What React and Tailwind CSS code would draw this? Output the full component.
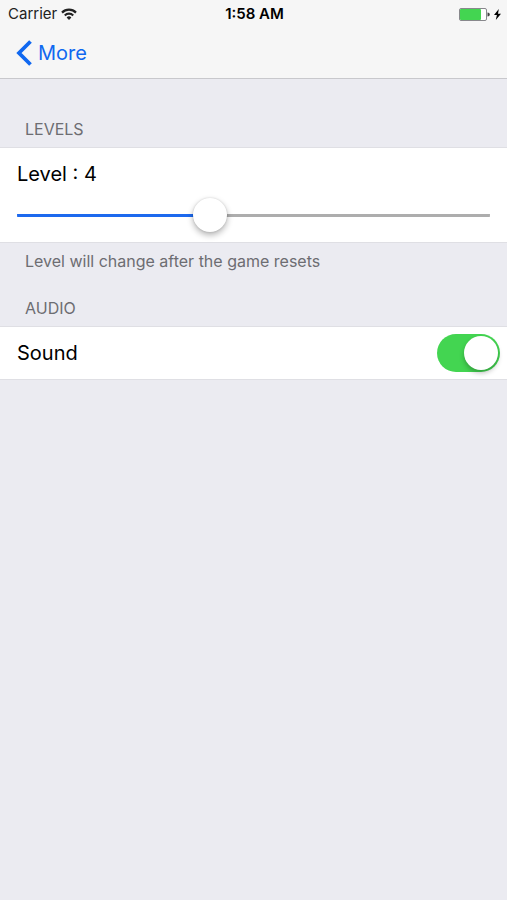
import React, { useState } from 'react';

const WifiIcon = ({ className }) => (
  <svg className={className} viewBox="0 0 16 12" fill="none" stroke="currentColor" strokeWidth="2.2" aria-hidden="true">
    <path d="M1 4.6a9.9 9.9 0 0 1 14 0" />
    <path d="M3.8 7.4a5.9 5.9 0 0 1 8.4 0" />
    <path d="M8 12 5.6 9.5a3.4 3.4 0 0 1 4.8 0Z" fill="currentColor" stroke="none" />
  </svg>
);

const BatteryIcon = ({ className }) => (
  <svg className={className} viewBox="0 0 31 13" aria-hidden="true">
    <rect x="0.5" y="0.5" width="27" height="12" rx="1.5" fill="#fff" stroke="#88888c" />
    <rect x="1" y="1" width="21" height="11" rx="1" fill="#43d551" />
    <path d="M28.5 4.5c1.7.3 2.3 1 2.3 2s-.6 1.7-2.3 2Z" fill="#444" />
  </svg>
);

const BoltIcon = ({ className }) => (
  <svg className={className} viewBox="0 0 7 11" fill="currentColor" aria-hidden="true">
    <path d="M4.8 0 0 6h2.9L1.8 11 7 4.7H4Z" />
  </svg>
);

const BackIcon = ({ className }) => (
  <svg className={className} viewBox="0 0 16 26" fill="none" stroke="currentColor" strokeWidth="3.8" aria-hidden="true">
    <path d="M14.5 1.5 3 13l11.5 11.5" />
  </svg>
);

const MAX_LEVEL = 10;

const App = () => {
  const [level, setLevel] = useState(4);
  const [sound, setSound] = useState(true);

  const filled = (level / MAX_LEVEL) * 100;

  return (
    <div className="min-h-screen bg-[#ebebf1] font-['Inter','Liberation_Sans',sans-serif] text-black">
      {/* Header */}
      <header className="bg-[#f6f6f6] border-b border-[#c8c8cc]">
        <div className="grid grid-cols-3 items-center h-7 pl-2 pr-1.5 text-[15px]">
          <div className="flex items-center gap-1 text-[#222]">
            <span>Carrier</span>
            <WifiIcon className="w-4 h-3" />
          </div>
          <span className="text-center font-semibold">1:58 AM</span>
          <div className="flex items-center justify-end gap-1">
            <BatteryIcon className="w-[31px] h-[13px]" />
            <BoltIcon className="w-[7px] h-[11px]" />
          </div>
        </div>
        <nav className="flex items-center h-[50px] px-4">
          <button type="button" className="flex items-center gap-1.5 text-xl text-[#1068f0]">
            <BackIcon className="w-4 h-[26px]" />
            More
          </button>
        </nav>
      </header>

      <main>
        {/* Levels */}
        <section>
          <h2 className="px-[25px] pt-10 pb-2 text-base leading-5 text-[#6d6d72]">LEVELS</h2>
          <div className="bg-white border-y border-[#dfdfe4] px-[17px] pt-3 pb-2.5">
            <label htmlFor="level" className="block text-xl leading-7">Level : {level}</label>
            <input
              id="level"
              type="range"
              min="0"
              max={MAX_LEVEL}
              value={level}
              onChange={(e) => setLevel(Number(e.target.value))}
              style={{
                backgroundImage: `linear-gradient(to right, #1d69ee ${filled}%, #adadad ${filled}%)`,
              }}
              className="block w-full h-[34px] mt-2.5 appearance-none rounded-full bg-no-repeat bg-center bg-[length:100%_3px] [&::-webkit-slider-thumb]:appearance-none [&::-webkit-slider-thumb]:size-[34px] [&::-webkit-slider-thumb]:rounded-full [&::-webkit-slider-thumb]:bg-white [&::-webkit-slider-thumb]:shadow-[0_3px_6px_rgba(0,0,0,0.3),0_0_2px_rgba(0,0,0,0.15)]"
            />
          </div>
          <p className="px-[25px] pt-2 text-base leading-5 text-[#6d6d72]">
            Level will change after the game resets
          </p>
        </section>

        {/* Audio */}
        <section>
          <h2 className="px-[25px] pt-[27px] pb-2 text-base leading-5 text-[#6d6d72]">AUDIO</h2>
          <div className="flex items-center justify-between bg-white border-y border-[#dfdfe4] h-[54px] pl-[17px] pr-[7px]">
            <label htmlFor="sound" className="text-xl">Sound</label>
            <input
              id="sound"
              type="checkbox"
              role="switch"
              checked={sound}
              onChange={(e) => setSound(e.target.checked)}
              className="flex appearance-none w-[63px] h-[38px] p-0.5 rounded-full bg-[#e5e5ea] checked:bg-[#43d551] checked:justify-end before:size-[34px] before:rounded-full before:bg-white before:shadow-[0_3px_5px_rgba(0,0,0,0.25)]"
            />
          </div>
        </section>
      </main>
    </div>
  );
};

export default App;
